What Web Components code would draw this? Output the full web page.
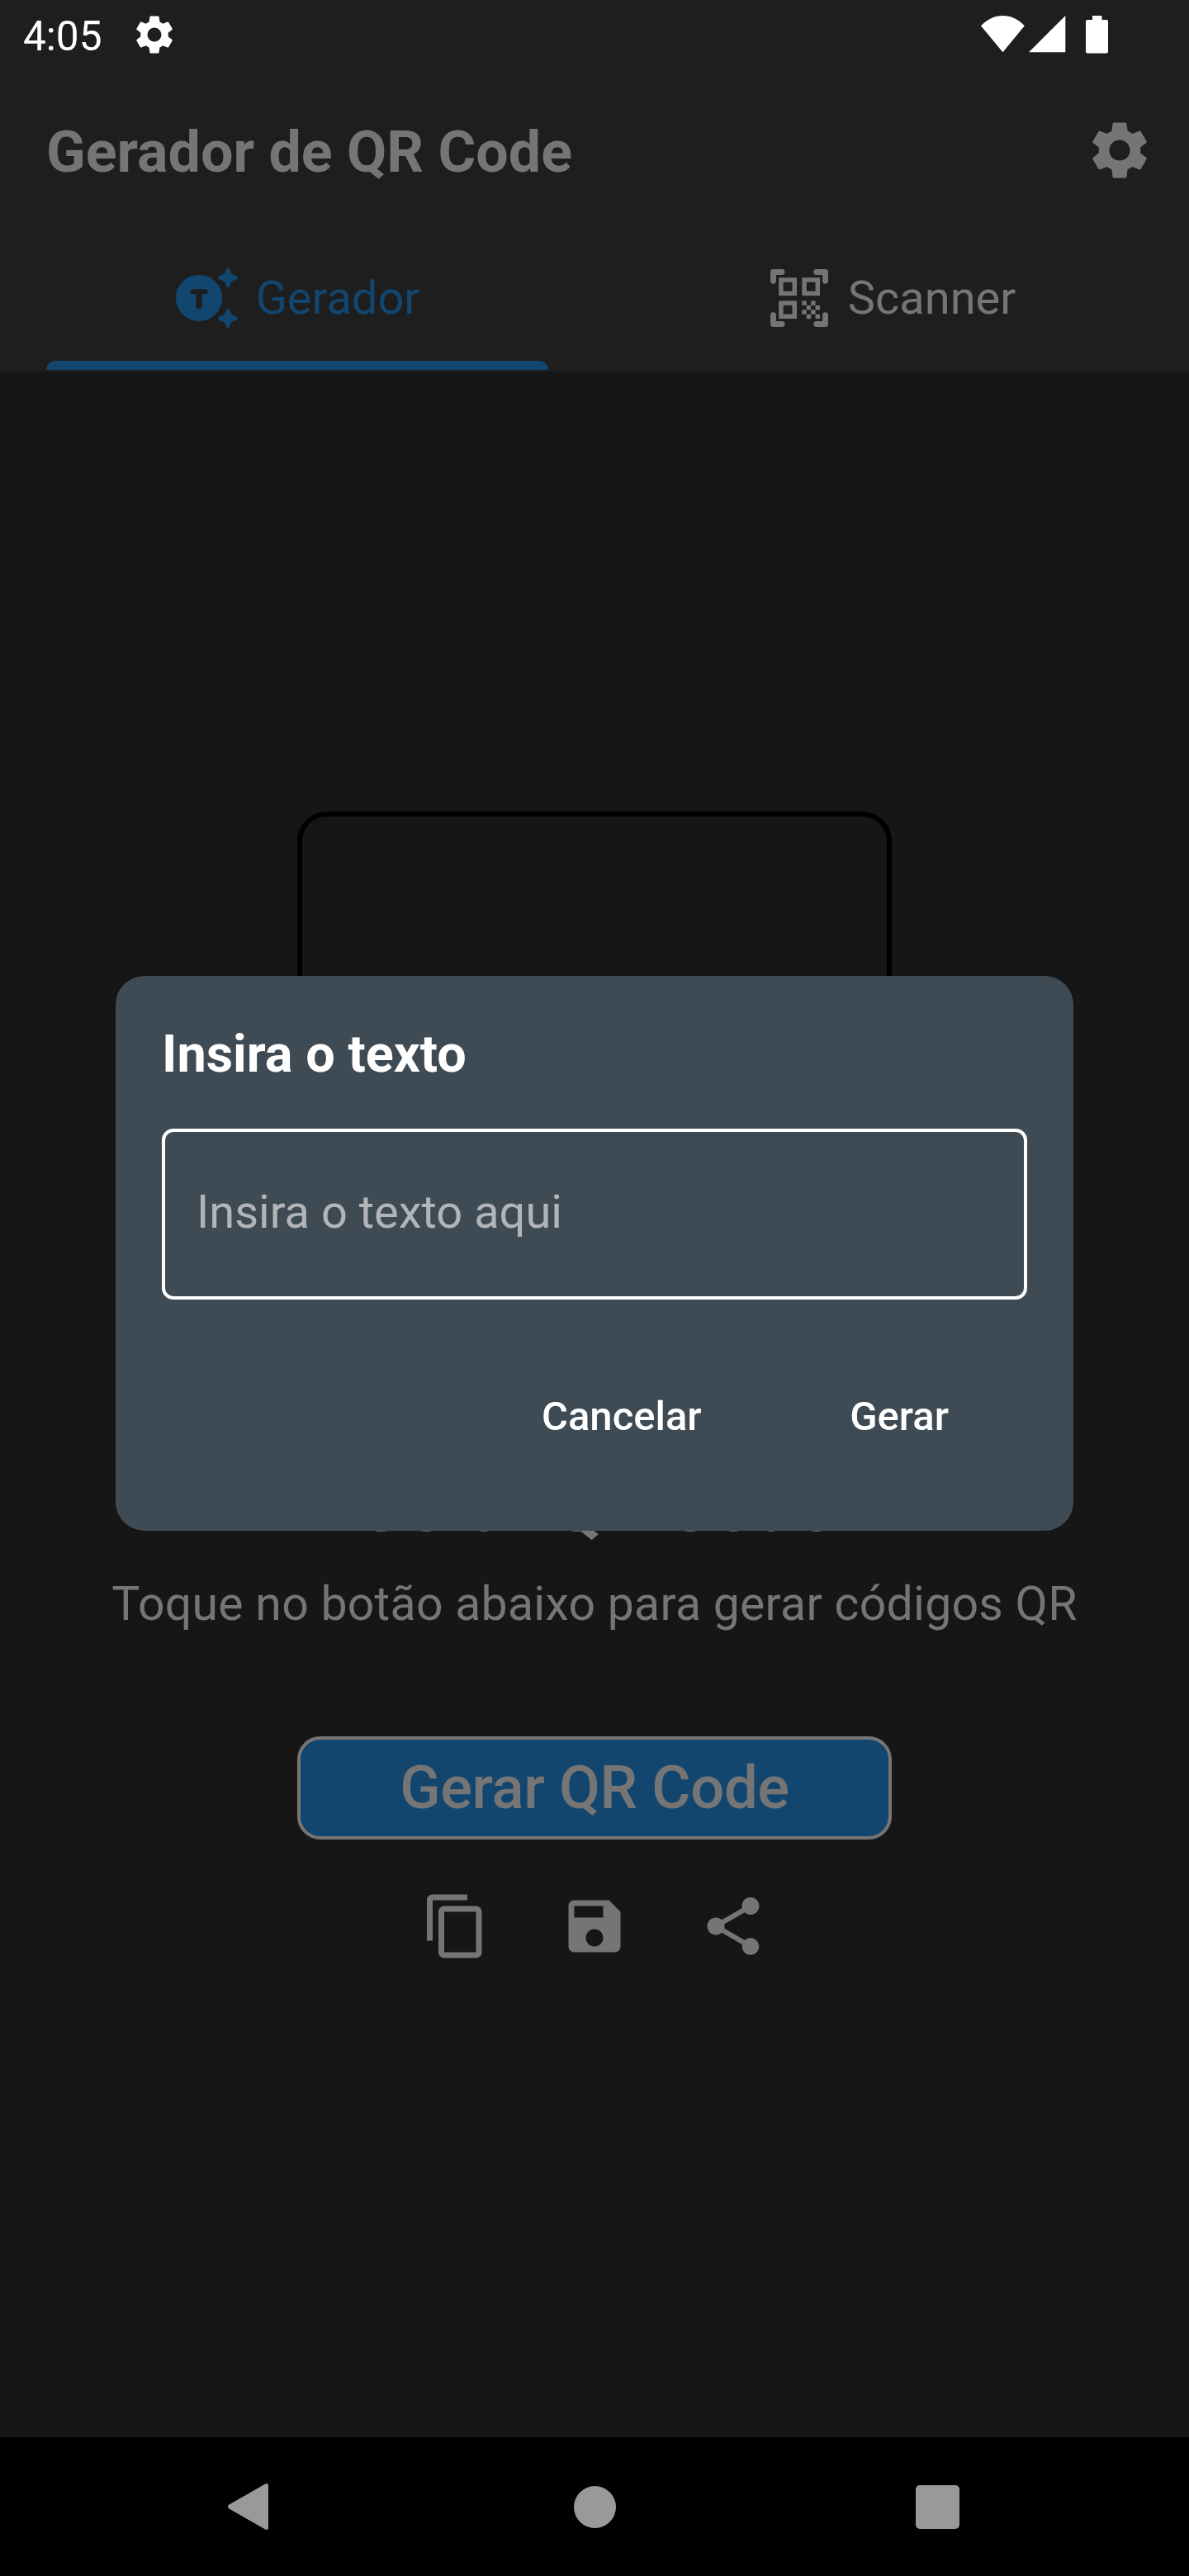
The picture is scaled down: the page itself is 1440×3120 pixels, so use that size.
<!DOCTYPE html>
<html lang="pt-BR">
<head>
<meta charset="utf-8">
<title>Gerador de QR Code</title>
<style>
html,body{margin:0;padding:0;background:#161616}
body{width:1440px;height:3120px;overflow:hidden;font-family:Roboto,"Liberation Sans",sans-serif}
</style>
</head>
<body>
<qr-phone>
  <status-bar slot="top" time="4:05"></status-bar>
  <app-header slot="top" heading="Gerador de QR Code">
    <tab-item active label="Gerador"><app-icon name="generator" style="--w:84px;--h:84px"></app-icon></tab-item>
    <tab-item label="Scanner"><app-icon name="scanner" style="--w:70px;--h:70px"></app-icon></tab-item>
  </app-header>
  <qr-screen>
    <span slot="headline">Gerar QR Code</span>
    <span slot="hint">Toque no botão abaixo para gerar códigos QR</span>
    <span slot="action">Gerar QR Code</span>
    <app-icon slot="tools" name="copy"></app-icon>
    <app-icon slot="tools" name="save"></app-icon>
    <app-icon slot="tools" name="share"></app-icon>
  </qr-screen>
  <nav-bar slot="bottom"></nav-bar>
  <text-dialog slot="overlay" heading="Insira o texto" placeholder="Insira o texto aqui">
    <dialog-button>Cancelar</dialog-button>
    <dialog-button>Gerar</dialog-button>
  </text-dialog>
</qr-phone>
<script>
const define = (name, render) => customElements.define(name, class extends HTMLElement {
  constructor() { super(); this.attachShadow({ mode: 'open' }); }
  connectedCallback() { this.shadowRoot.innerHTML = render(this); }
});

const GEAR = '<path d="M19.14 12.94c.04-.3.06-.61.06-.94 0-.32-.02-.64-.07-.94l2.03-1.58c.18-.14.23-.41.12-.61l-1.92-3.32c-.12-.22-.37-.29-.59-.22l-2.39.96c-.5-.38-1.03-.7-1.62-.94l-.36-2.54c-.04-.24-.24-.41-.48-.41h-3.84c-.24 0-.43.17-.47.41l-.36 2.54c-.59.24-1.13.57-1.62.94l-2.39-.96c-.22-.08-.47 0-.59.22L2.74 8.87c-.12.21-.08.47.12.61l2.03 1.58c-.05.3-.09.63-.09.94s.02.64.07.94l-2.03 1.58c-.18.14-.23.41-.12.61l1.92 3.32c.12.22.37.29.59.22l2.39-.96c.5.38 1.03.7 1.62.94l.36 2.54c.05.24.24.41.48.41h3.84c.24 0 .44-.17.47-.41l.36-2.54c.59-.24 1.13-.56 1.62-.94l2.39.96c.22.08.47 0 .59-.22l1.92-3.32c.12-.22.07-.47-.12-.61l-2.01-1.58zM12 15.6c-1.98 0-3.6-1.62-3.6-3.6s1.62-3.6 3.6-3.6 3.6 1.62 3.6 3.6-1.62 3.6-3.6 3.6z"/>';
const SPARK = 'c1.6 0 2.1 1.2 2.5 2.5 1.1 3.6 1.6 4.6 5.3 5.9 2.2.8 3.9 1.4 3.9 3.3s-1.7 2.4-3.9 3.3c-3.7 1.3-4.2 2.3-5.3 5.9-.4 1.3-.9 2.5-2.5 2.5s-2.1-1.2-2.5-2.5c-1.1-3.6-1.6-4.6-5.3-5.9-2.2-.9-3.9-1.4-3.9-3.3s1.7-2.5 3.9-3.3c3.7-1.3 4.2-2.3 5.3-5.9.4-1.3.9-2.5 2.5-2.5z';
const CELLS = [[0,0],[2,0],[1,1],[3,1],[0,2],[2,2],[1,3],[3,3]]
  .map(([x, y]) => `<rect x="${38.3 + x * 5.43}" y="${38.4 + y * 5.43}" width="5.43" height="5.43"/>`).join('');
const ICONS = {
  gear: ['0 0 24 24', GEAR],
  generator: ['0 0 84 84', `<circle cx="37" cy="42" r="28.1"/><path d="M72 5.6${SPARK}M72 54.8${SPARK}"/>
    <g stroke="#1e1e1e" stroke-linecap="round" fill="none"><path d="M29.2 34.2h15.6" stroke-width="5.8"/><path d="M37 35v16.2" stroke-width="7.4"/></g>`],
  scanner: ['0 0 70 70', `<path fill="none" stroke="currentColor" stroke-width="6.9" stroke-linecap="round" stroke-linejoin="round" d="M3.5 14.2V3.5h10.6M55.9 3.5h10.6v10.7M66.5 55.8v10.7H55.9M14.1 66.5H3.5V55.8"/>
    <g fill="none" stroke="currentColor" stroke-width="5.5"><rect x="12.9" y="13" width="16.4" height="16.4"/><rect x="41.1" y="13" width="16.2" height="16.4"/><rect x="12.9" y="41.1" width="16.4" height="16.2"/></g>${CELLS}`],
  copy: ['0 0 24 24', '<path d="M16 1H4c-1.1 0-2 .9-2 2v14h2V3h12V1zm3 4H8c-1.1 0-2 .9-2 2v14c0 1.1.9 2 2 2h11c1.1 0 2-.9 2-2V7c0-1.1-.9-2-2-2zm0 16H8V7h11v14z"/>'],
  save: ['0 0 24 24', '<path d="M17 3H5c-1.11 0-2 .9-2 2v14c0 1.1.89 2 2 2h14c1.1 0 2-.9 2-2V7l-4-4zm-5 16c-1.66 0-3-1.34-3-3s1.34-3 3-3 3 1.34 3 3-1.34 3-3 3zm3-10H5V5h10v4z"/>'],
  share: ['0 0 24 24', '<path d="M18 16.08c-.76 0-1.44.3-1.96.77L8.91 12.7c.05-.23.09-.46.09-.7s-.04-.47-.09-.7l7.05-4.11c.54.5 1.25.81 2.04.81 1.66 0 3-1.34 3-3s-1.34-3-3-3-3 1.34-3 3c0 .24.04.47.09.7L8.04 9.81C7.5 9.31 6.79 9 6 9c-1.66 0-3 1.34-3 3s1.34 3 3 3c.79 0 1.5-.31 2.04-.81l7.12 4.16c-.05.21-.08.43-.08.65 0 1.61 1.31 2.92 2.92 2.92s2.92-1.31 2.92-2.92-1.31-2.92-2.92-2.92z"/>'],
  wifi: ['0 0 53 45', '<path d="M0 12.2C7.5 4.600 16.500 0 26.500 0s19 4.600 26.300 12.200L26.500 44.300z"/>'],
  signal: ['0 0 45 45', '<path d="M0 44.200L44.300 0v44.200z"/>'],
  battery: ['0 0 27 46', '<path d="M8 0h11.500v5H25q2 0 2 2v36.500q0 2-2 2H2q-2 0-2-2V7q0-2 2-2h6z"/>'],
  back: ['0 0 49 56', '<path d="M45.200.5Q49-1.200 49 3.200v49.600q0 4.400-3.800 2.700L1.500 30.600q-3-2.600 0-5.200z"/>'],
};

define('app-icon', el => {
  const [box, art] = ICONS[el.getAttribute('name')];
  return `<style>:host{display:block;flex:none;width:var(--w,84px);height:var(--h,84px)}svg{display:block;width:100%;height:100%;fill:currentColor;overflow:visible}</style>
  <svg viewBox="${box}" aria-hidden="true">${art}</svg>`;
});

define('status-bar', el => `<style>
  :host{display:flex;height:84px;color:#fff;box-sizing:border-box;padding:0 98px 0 28px}
  .time{font-size:49.5px;line-height:88px;width:131px}
  .left,.right{display:flex;align-items:flex-start}
  .left{flex:1}
  .left app-icon{margin-top:14.2px}
  .right{padding-top:19.2px}
  </style>
  <div class="left"><span class="time">${el.getAttribute('time')}</span><app-icon name="gear" style="--w:56px;--h:56px"></app-icon></div>
  <div class="right"><app-icon name="wifi" style="--w:53px;--h:45px;margin-right:4.7px"></app-icon><app-icon name="signal" style="--w:45px;--h:45px;margin-right:24.3px"></app-icon><app-icon name="battery" style="--w:27px;--h:46px"></app-icon></div>`);

define('app-header', el => `<style>
  :host{display:block;height:366px;background:#1e1e1e}
  .bar{display:flex;align-items:center;justify-content:space-between;height:196px;padding:0 42px 0 56px;color:#757575}
  h1{margin:0;padding-top:4px;font-size:70px;font-weight:700;line-height:84px;white-space:nowrap}
  .tabs{display:flex}
  </style>
  <div class="bar"><h1>${el.getAttribute('heading')}</h1><app-icon name="gear"></app-icon></div>
  <div class="tabs"><slot></slot></div>`);

define('tab-item', el => `<style>
  :host{display:flex;flex-direction:column;flex:1;height:170px;box-sizing:border-box;padding:4px 56px 2px;color:#757575}
  :host([active]){color:#12466f}
  .row{display:flex;flex:1;align-items:center;justify-content:center;gap:24px;padding-left:3px;font-size:56px;line-height:66px}
  :host([active]) .row{gap:22px;padding:0 8px 0 0}
  .line{height:10.7px;border-radius:11px 11px 0 0}
  :host([active]) .line{background:#12466f}
  </style>
  <div class="row"><slot></slot><span>${el.getAttribute('label')}</span></div><div class="line"></div>`);

define('qr-screen', () => `<style>
  :host{display:flex;flex:1;flex-direction:column;align-items:center;box-sizing:border-box;padding-top:533px;background:#161616;color:#757575;white-space:nowrap}
  .frame{width:720px;height:720px;box-sizing:border-box;border:6px solid #000;border-radius:36px}
  .headline{margin-top:72px;font-size:87.5px;font-weight:700;line-height:98px}
  .hint{margin-top:37px;font-size:57.2px;line-height:66px;letter-spacing:.24px}
  .action{display:flex;align-items:center;justify-content:center;width:720px;height:125px;box-sizing:border-box;margin-top:126.5px;border:4px solid #757575;border-radius:28px;background:#12466f;font-size:72.5px;font-weight:500;letter-spacing:-.42px}
  .tools{display:flex;gap:84px;margin-top:63px}
  </style>
  <div class="frame"></div>
  <div class="headline"><slot name="headline"></slot></div>
  <div class="hint"><slot name="hint"></slot></div>
  <div class="action"><slot name="action"></slot></div>
  <div class="tools"><slot name="tools"></slot></div>`);

define('text-dialog', el => `<style>
  :host{display:block;width:1160px;height:672px;box-sizing:border-box;padding:57px 56px 0;border-radius:35px;background:#3f4b54;color:#fff;white-space:nowrap}
  h2{margin:0;font-size:63px;font-weight:700;line-height:76px}
  .field{display:flex;align-items:center;height:207px;box-sizing:border-box;margin-top:52px;padding:0 38px 5px;border:4px solid #fff;border-radius:14px;color:#b1b5b9;font-size:56px;line-height:66px}
  .actions{display:flex;justify-content:flex-end;gap:179.5px;margin-top:112.5px;padding-right:95px}
  </style>
  <h2>${el.getAttribute('heading')}</h2>
  <div class="field">${el.getAttribute('placeholder')}</div>
  <div class="actions"><slot></slot></div>`);

define('dialog-button', () => `<style>:host{display:block;font-size:49px;font-weight:500;line-height:58px}</style><slot></slot>`);

define('nav-bar', () => `<style>
  :host{display:flex;align-items:center;justify-content:space-between;height:168px;box-sizing:border-box;padding:0 278.5px 0 276px;background:#000;color:#999}
  .home{width:51px;height:51px;border-radius:50%;background:#999;margin-left:7.5px}
  .recent{width:53px;height:53px;border-radius:5px;background:#999}
  </style>
  <app-icon name="back" style="--w:49px;--h:56px"></app-icon><div class="home"></div><div class="recent"></div>`);

define('qr-phone', () => `<style>
  :host{display:flex;flex-direction:column;position:relative;width:1440px;height:3120px;background:#1e1e1e}
  .overlay{position:absolute;left:140px;top:1182px}
  </style>
  <slot name="top"></slot><slot></slot><slot name="bottom"></slot>
  <div class="overlay"><slot name="overlay"></slot></div>`);
</script>
</body>
</html>
